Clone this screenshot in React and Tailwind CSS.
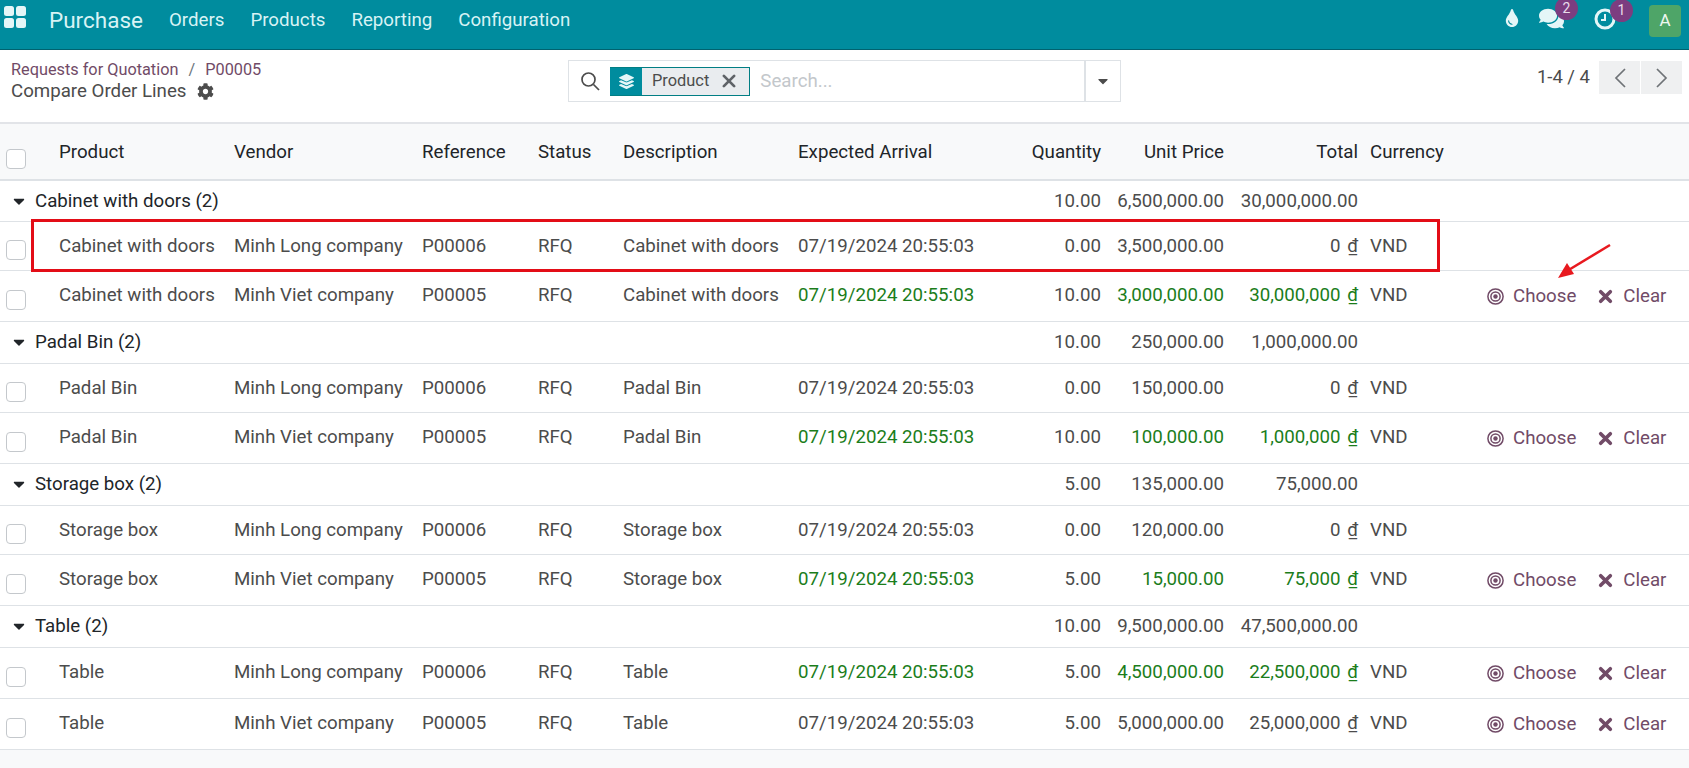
import React from 'react';
import { FaTint, FaComments, FaCog, FaCaretDown, FaLayerGroup } from 'react-icons/fa';

const groups = [
  {
    name: 'Cabinet with doors (2)', qty: '10.00', price: '6,500,000.00', total: '30,000,000.00', h: 'h-[41px]',
    rows: [
      { product: 'Cabinet with doors', vendor: 'Minh Long company', ref: 'P00006', desc: 'Cabinet with doors', qty: '0.00', price: '3,500,000.00', total: '0', h: 'h-[49px]' },
      { product: 'Cabinet with doors', vendor: 'Minh Viet company', ref: 'P00005', desc: 'Cabinet with doors', qty: '10.00', price: '3,000,000.00', total: '30,000,000', green: true, actions: true, h: 'h-[51px]' },
    ],
  },
  {
    name: 'Padal Bin (2)', qty: '10.00', price: '250,000.00', total: '1,000,000.00', h: 'h-[42px]',
    rows: [
      { product: 'Padal Bin', vendor: 'Minh Long company', ref: 'P00006', desc: 'Padal Bin', qty: '0.00', price: '150,000.00', total: '0', h: 'h-[49px]' },
      { product: 'Padal Bin', vendor: 'Minh Viet company', ref: 'P00005', desc: 'Padal Bin', qty: '10.00', price: '100,000.00', total: '1,000,000', green: true, actions: true, h: 'h-[51px]' },
    ],
  },
  {
    name: 'Storage box (2)', qty: '5.00', price: '135,000.00', total: '75,000.00', h: 'h-[42px]',
    rows: [
      { product: 'Storage box', vendor: 'Minh Long company', ref: 'P00006', desc: 'Storage box', qty: '0.00', price: '120,000.00', total: '0', h: 'h-[49px]' },
      { product: 'Storage box', vendor: 'Minh Viet company', ref: 'P00005', desc: 'Storage box', qty: '5.00', price: '15,000.00', total: '75,000', green: true, actions: true, h: 'h-[51px]' },
    ],
  },
  {
    name: 'Table (2)', qty: '10.00', price: '9,500,000.00', total: '47,500,000.00', h: 'h-[42px]',
    rows: [
      { product: 'Table', vendor: 'Minh Long company', ref: 'P00006', desc: 'Table', dateGreen: true, qty: '5.00', price: '4,500,000.00', total: '22,500,000', greenNums: true, actions: true, h: 'h-[51px]' },
      { product: 'Table', vendor: 'Minh Viet company', ref: 'P00005', desc: 'Table', qty: '5.00', price: '5,000,000.00', total: '25,000,000', actions: true, h: 'h-[51px]' },
    ],
  },
];

const Checkbox = () => (
  <span className="block w-[20px] h-[20px] rounded-[4px] border border-[#c4c8cc] bg-white" />
);

const AppsIcon = () => (
  <svg width="22" height="22" viewBox="0 0 22 22" fill="#e4f6f7" className="block">
    <rect x="0" y="0" width="10" height="10" rx="2.5" />
    <rect x="12" y="0" width="10" height="10" rx="2.5" />
    <rect x="0" y="12" width="10" height="10" rx="2.5" />
    <rect x="12" y="12" width="10" height="10" rx="2.5" />
  </svg>
);

const Cross = ({ size, width }) => (
  <svg width={size} height={size} viewBox="0 0 14 14" stroke="currentColor" strokeWidth={width} strokeLinecap="round" className="block shrink-0">
    <path d="M2.5 2.5L11.5 11.5M11.5 2.5L2.5 11.5" />
  </svg>
);

const Target = () => (
  <svg width="17" height="17" viewBox="0 0 17 17" fill="none" stroke="currentColor" className="block shrink-0">
    <circle cx="8.5" cy="8.5" r="7.6" strokeWidth="1.5" />
    <circle cx="8.5" cy="8.5" r="4.6" strokeWidth="1.5" />
    <circle cx="8.5" cy="8.5" r="2.2" fill="currentColor" stroke="none" />
  </svg>
);

const Chevron = ({ d }) => (
  <svg width="14" height="22" viewBox="0 0 14 22" fill="none" stroke="#6f7377" strokeWidth="1.7" className="block">
    <path d={d} />
  </svg>
);

const Badge = ({ children }) => (
  <span className="absolute -top-[9px] left-[16px] w-[23px] h-[23px] rounded-full bg-[#7c3d80] text-[#e8dcea] text-[14px] flex items-center justify-center">
    {children}
  </span>
);

const Nav = () => (
  <div className="h-[50px] bg-[#008c9e] border-b border-[#00626f] flex items-start text-[#d8f3f5] text-[18.7px] shrink-0">
    <span className="ml-[4px] mt-[6px]"><AppsIcon /></span>
    <span className="ml-[23px] mt-[4px] text-[22.5px]">Purchase</span>
    <span className="ml-[26px] mt-[6px]">Orders</span>
    <span className="ml-[26px] mt-[6px]">Products</span>
    <span className="ml-[26px] mt-[6px]">Reporting</span>
    <span className="ml-[26px] mt-[6px]">Configuration</span>
    <div className="ml-auto flex items-start">
      <FaTint className="mt-[9px] text-[18px] text-[#e4f6f7]" />
      <span className="relative ml-[18px] mt-[6px]">
        <FaComments className="block text-[25px] text-[#e4f6f7]" />
        <Badge>2</Badge>
      </span>
      <span className="relative ml-[30px] mt-[8px]">
        <svg width="22" height="22" viewBox="0 0 22 22" fill="none" stroke="#e4f6f7" strokeWidth="3" className="block">
          <circle cx="11" cy="11" r="9" />
          <path d="M11 6v6H7" strokeWidth="2" />
        </svg>
        <Badge>1</Badge>
      </span>
      <span className="ml-[33px] mr-[8px] mt-[5px] w-[32px] h-[32px] rounded-[4px] bg-[#4ea568] text-[#eef7f0] text-[17px] flex items-center justify-center">A</span>
    </div>
  </div>
);

const ControlPanel = () => (
  <div className="h-[74px] flex items-start relative shrink-0 border-b-2 border-[#e2e4e8]">
    <div className="pl-[11px] pt-[9px] w-[568px] shrink-0">
      <div className="text-[16.3px] leading-[21px] text-[#714b67]">
        Requests for Quotation <span className="text-[#6c757d] mx-[6px]">/</span> P00005
      </div>
      <div className="text-[18.7px] leading-[22px] text-[#4c4c4c] flex items-center">
        Compare Order Lines <FaCog className="ml-[10px] text-[17px] text-[#4c4c4c]" />
      </div>
    </div>
    <div className="mt-[10px] flex h-[42px] border border-[#dee2e6] w-[553px] shrink-0">
      <div className="flex-1 flex items-center min-w-0">
        <svg width="20" height="20" viewBox="0 0 20 20" fill="none" stroke="#4c4c4c" strokeWidth="1.7" className="ml-[11px] shrink-0">
          <circle cx="8.5" cy="8.5" r="6.5" />
          <path d="M13.5 13.5L19 19" />
        </svg>
        <div className="ml-[10px] flex h-[29px] border border-[#017e84] bg-[#e9ecef] text-[16.4px] text-[#4c4c4c] items-center">
          <span className="w-[32px] h-full bg-[#008c9e] flex items-center justify-center -ml-[1px]">
            <FaLayerGroup className="text-[#e4f6f7] text-[15px]" />
          </span>
          <span className="ml-[10px]">Product</span>
          <span className="ml-[12px] mr-[12px] text-[#5f6368]"><Cross size={16} width={2.4} /></span>
        </div>
        <span className="ml-[10px] text-[18.7px] text-[#c3c7cb]">Search...</span>
      </div>
      <div className="w-[36px] border-l-2 border-[#dee2e6] flex items-center justify-center">
        <FaCaretDown className="text-[#4c4c4c] text-[16px]" />
      </div>
    </div>
    <div className="ml-auto mt-[11px] mr-[7px] flex items-start">
      <span className="text-[18.5px] text-[#4c4c4c] leading-[32px] mr-[9px]">1-4 / 4</span>
      <span className="w-[41px] h-[33px] bg-[#eff0f1] flex items-center justify-center mr-[1px]">
        <Chevron d="M12 2L3 11L12 20" />
      </span>
      <span className="w-[41px] h-[33px] bg-[#eff0f1] flex items-center justify-center">
        <Chevron d="M2 2L11 11L2 20" />
      </span>
    </div>
  </div>
);

const Cols = () => (
  <colgroup>
    <col className="w-[50px]" />
    <col className="w-[175px]" />
    <col className="w-[188px]" />
    <col className="w-[116px]" />
    <col className="w-[84px]" />
    <col className="w-[175px]" />
    <col className="w-[214px]" />
    <col className="w-[106px]" />
    <col className="w-[123px]" />
    <col className="w-[134px]" />
    <col className="w-[100px]" />
    <col />
  </colgroup>
);

const DataRow = ({ row }) => {
  const dateC = row.green || row.dateGreen ? 'text-[#1b7d1b]' : '';
  const numC = row.green || row.greenNums ? 'text-[#1b7d1b]' : '';
  // rows without buttons sit a little lower in the reference
  const pad = row.actions ? '' : 'pt-[2px]';
  return (
    <tr className={`${row.h} border-b border-[#dee2e6] text-[#4c4c4c]`}>
      <td className="pl-[6px] pt-[8px]"><Checkbox /></td>
      <td className={`pl-[9px] ${pad}`}>{row.product}</td>
      <td className={`pl-[9px] ${pad}`}>{row.vendor}</td>
      <td className={`pl-[9px] ${pad}`}>{row.ref}</td>
      <td className={`pl-[9px] ${pad}`}>RFQ</td>
      <td className={`pl-[10px] ${pad}`}>{row.desc}</td>
      <td className={`pl-[10px] ${pad} ${dateC}`}>07/19/2024 20:55:03</td>
      <td className={`pr-[7px] text-right ${pad}`}>{row.qty}</td>
      <td className={`pr-[7px] text-right ${pad} ${numC}`}>{row.price}</td>
      <td className={`pr-[7px] text-right ${pad} ${numC}`}>
        {row.total} <span className="underline ml-[2px]">₫</span>
      </td>
      <td className={`pl-[5px] ${pad}`}>VND</td>
      <td>
        {row.actions && (
          <div className="flex items-center text-[#714b67] ml-[22px] pt-[2px]">
            <Target />
            <span className="ml-[9px]">Choose</span>
            <span className="ml-[22px]"><Cross size={15} width={3.4} /></span>
            <span className="ml-[10px]">Clear</span>
          </div>
        )}
      </td>
    </tr>
  );
};

const App = () => (
  <div className="relative w-[1689px] h-[768px] overflow-hidden bg-[#f8f9fa] flex flex-col font-['Roboto',sans-serif] text-[18.7px]">
    <Nav />
    <div className="bg-white"><ControlPanel /></div>
    <table className="table-fixed w-full bg-white border-collapse">
      <Cols />
      <thead>
        <tr className="h-[56px] bg-[#f8f9fa] border-b-2 border-[#dee2e6] text-[#212529] text-left">
          <th className="pl-[6px] pt-[14px] font-normal"><Checkbox /></th>
          <th className="pl-[9px] pt-[1px] font-normal">Product</th>
          <th className="pl-[9px] pt-[1px] font-normal">Vendor</th>
          <th className="pl-[9px] pt-[1px] font-normal">Reference</th>
          <th className="pl-[9px] pt-[1px] font-normal">Status</th>
          <th className="pl-[10px] pt-[1px] font-normal">Description</th>
          <th className="pl-[10px] pt-[1px] font-normal">Expected Arrival</th>
          <th className="pr-[7px] pt-[1px] text-right font-normal">Quantity</th>
          <th className="pr-[7px] pt-[1px] text-right font-normal">Unit Price</th>
          <th className="pr-[7px] pt-[1px] text-right font-normal">Total</th>
          <th className="pl-[5px] pt-[1px] font-normal">Currency</th>
          <th />
        </tr>
      </thead>
      <tbody>
        {groups.map((g) => (
          <React.Fragment key={g.name}>
            <tr className={`${g.h} border-b border-[#dee2e6] text-[#4c4c4c]`}>
              <td colSpan={7} className="pl-[10px] text-[#212529]">
                <span className="flex items-center">
                  <FaCaretDown className="text-[#212529] text-[18px]" />
                  <span className="ml-[7px]">{g.name}</span>
                </span>
              </td>
              <td className="pr-[7px] text-right">{g.qty}</td>
              <td className="pr-[7px] text-right">{g.price}</td>
              <td className="pr-[7px] text-right">{g.total}</td>
              <td colSpan={2} />
            </tr>
            {g.rows.map((row) => <DataRow key={row.ref} row={row} />)}
          </React.Fragment>
        ))}
      </tbody>
    </table>

    {/* annotations drawn over the screenshot */}
    <div className="absolute left-[31px] top-[219px] w-[1409px] h-[53px] border-[3px] border-[#e30d17]" />
    <svg className="absolute left-[1550px] top-[240px]" width="62" height="42" viewBox="0 0 62 42" fill="none">
      <path d="M60 5L12 34" stroke="#e8191f" strokeWidth="2.5" />
      <path d="M8 38L24 34L17 23Z" fill="#e8191f" />
    </svg>
  </div>
);

export default App;
